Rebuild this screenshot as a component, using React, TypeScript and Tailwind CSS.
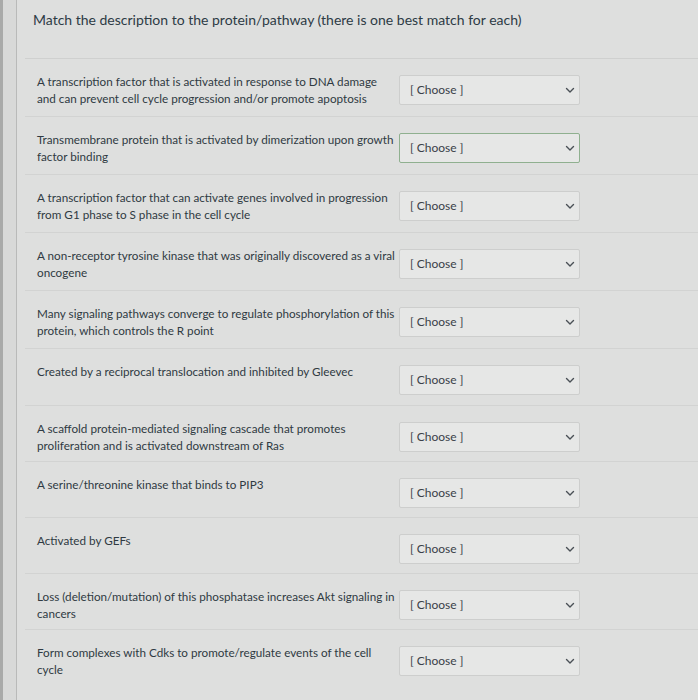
import React from "react";

const items: { text: string; h: string; green?: boolean }[] = [
  { h: "h-[58px]", text: "A transcription factor that is activated in response to DNA damage and can prevent cell cycle progression and/or promote apoptosis" },
  { h: "h-[58px]", text: "Transmembrane protein that is activated by dimerization upon growth factor binding", green: true },
  { h: "h-[58px]", text: "A transcription factor that can activate genes involved in progression from G1 phase to S phase in the cell cycle" },
  { h: "h-[58px]", text: "A non-receptor tyrosine kinase that was originally discovered as a viral oncogene" },
  { h: "h-[58px]", text: "Many signaling pathways converge to regulate phosphorylation of this protein, which controls the R point" },
  { h: "h-[57px]", text: "Created by a reciprocal translocation and inhibited by Gleevec" },
  { h: "h-[56px]", text: "A scaffold protein-mediated signaling cascade that promotes proliferation and is activated downstream of Ras" },
  { h: "h-[56px]", text: "A serine/threonine kinase that binds to PIP3" },
  { h: "h-[56px]", text: "Activated by GEFs" },
  { h: "h-[56px]", text: "Loss (deletion/mutation) of this phosphatase increases Akt signaling in cancers" },
  { h: "h-[56px]", text: "Form complexes with Cdks to promote/regulate events of the cell cycle" },
];

function Chevron() {
  return (
    <svg width="10" height="7" viewBox="0 0 10 7" className="shrink-0">
      <path d="M1.5 1.5 L5 5 L8.5 1.5" fill="none" stroke="#4a5056" strokeWidth="1.4" strokeLinecap="round" strokeLinejoin="round" />
    </svg>
  );
}

export default function App() {
  return (
    <div
      className="w-[698px] h-[700px] overflow-hidden bg-[#dedfde] flex text-[#2d3b45]"
      style={{ fontFamily: "Lato, 'Open Sans', sans-serif" }}
    >
      <div className="w-[3px] bg-[#a9aaa9]" />
      <div className="w-[14px] bg-[#d8d9d8] border-r border-[#b9bab9]" />
      <div className="flex-1 flex flex-col">
        <div className="h-[41px] pl-[16px] pt-[11px] text-[14px] leading-[18px]">
          Match the description to the protein/pathway (there is one best match for each)
        </div>
        <div className="h-[17px]" />
        <div className="border-t border-[#cfd0cf] ml-[8px]" />
        <div className="flex flex-col">
          {items.map((it, i) => (
            <div
              key={i}
              className={`flex items-start pt-[16px] ${it.h} ml-[8px] pl-[12px] ${
                i < items.length - 1 ? "border-b border-[#d2d3d2]" : ""
              }`}
            >
              <div className="w-[360px] mr-[2px] mt-[-2px] text-[11.7px] leading-[17px] text-[#2f3a42]">
                {it.text}
              </div>
              <div
                className={`w-[181px] h-[30px] flex items-center justify-between pl-[10px] pr-[4px] rounded-[2px] bg-[#e6e7e6] border ${
                  it.green ? "border-[#8fb08f] border-[1.5px]" : "border-[#cdcecd]"
                }`}
              >
                <span className="text-[12px] text-[#3a4148]">[ Choose ]</span>
                <Chevron />
              </div>
            </div>
          ))}
        </div>
      </div>
    </div>
  );
}
